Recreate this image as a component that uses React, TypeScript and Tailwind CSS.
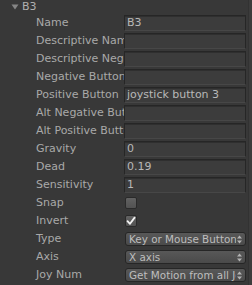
import React from "react";

const font = { fontFamily: '"DejaVu Sans", "Liberation Sans", sans-serif' };

function Label({ text }: { text: string }) {
  return (
    <div className="w-[124px] shrink-0 pl-[36px] overflow-hidden whitespace-nowrap text-[11px] leading-[18px] text-[#a9a9a9]">
      {text}
    </div>
  );
}

function Field({ value }: { value?: string }) {
  return (
    <div className="w-[122px] h-[16px] bg-[#3c3c3c] border border-[#262626] border-b-[#474747] shadow-[inset_0_1px_0_#2f2f2f] overflow-hidden whitespace-nowrap text-[11px] leading-[14px] pl-[2px] text-[#b8b8b8]">
      {value}
    </div>
  );
}

function Check({ checked }: { checked?: boolean }) {
  return (
    <div className="ml-[1px] w-[12px] h-[12px] rounded-[2px] bg-gradient-to-b from-[#626262] to-[#525252] border border-[#2a2a2a] flex items-center justify-center">
      {checked && (
        <svg width="10" height="10" viewBox="0 0 10 10">
          <path d="M1.5 5.2 L4 7.8 L8.6 1.6" stroke="#f2f2f2" strokeWidth="1.8" fill="none" strokeLinecap="round" strokeLinejoin="round" />
        </svg>
      )}
    </div>
  );
}

function Popup({ value }: { value: string }) {
  return (
    <div className="ml-[1px] w-[121px] h-[14px] rounded-[3px] bg-gradient-to-b from-[#585858] to-[#4a4a4a] border border-[#262626] flex items-center pl-[3px] pr-[3px] text-[10.4px] leading-[12px] text-[#bebebe]">
      <span className="flex-1 overflow-hidden whitespace-nowrap">{value}</span>
      <svg width="5" height="9" viewBox="0 0 5 9" className="shrink-0 ml-[1px]">
        <path d="M0 3.5 L2.5 0.5 L5 3.5 Z" fill="#b4b4b4" />
        <path d="M0 5.5 L2.5 8.5 L5 5.5 Z" fill="#b4b4b4" />
      </svg>
    </div>
  );
}

function Row({ label, children }: { label: string; children?: React.ReactNode }) {
  return (
    <div className="h-[18px] flex items-center">
      <Label text={label} />
      {children}
    </div>
  );
}

export default function App() {
  return (
    <div className="w-[252px] h-[285px] bg-[#383838] overflow-hidden relative" style={font}>
      <div className="absolute right-0 top-0 w-[4px] h-full bg-[#3c3c3c] border-l border-[#323232]" />
      <div className="h-[14px] flex items-center pl-[11px] text-[11px] text-[#b0b0b0]">
        <svg width="8" height="6" viewBox="0 0 8 6" className="mr-[3px]">
          <path d="M0.5 0.5 L7.5 0.5 L4 5.5 Z" fill="#858585" />
        </svg>
        <span className="leading-[14px]">B3</span>
      </div>
      <Row label="Name"><Field value="B3" /></Row>
      <Row label="Descriptive Name"><Field /></Row>
      <Row label="Descriptive Negative Name"><Field /></Row>
      <Row label="Negative Button"><Field /></Row>
      <Row label="Positive Button"><Field value="joystick button 3" /></Row>
      <Row label="Alt Negative Button"><Field /></Row>
      <Row label="Alt Positive Button"><Field /></Row>
      <Row label="Gravity"><Field value="0" /></Row>
      <Row label="Dead"><Field value="0.19" /></Row>
      <Row label="Sensitivity"><Field value="1" /></Row>
      <Row label="Snap"><Check /></Row>
      <Row label="Invert"><Check checked /></Row>
      <Row label="Type"><Popup value="Key or Mouse Button" /></Row>
      <Row label="Axis"><Popup value="X axis" /></Row>
      <Row label="Joy Num"><Popup value="Get Motion from all Joysticks" /></Row>
    </div>
  );
}
